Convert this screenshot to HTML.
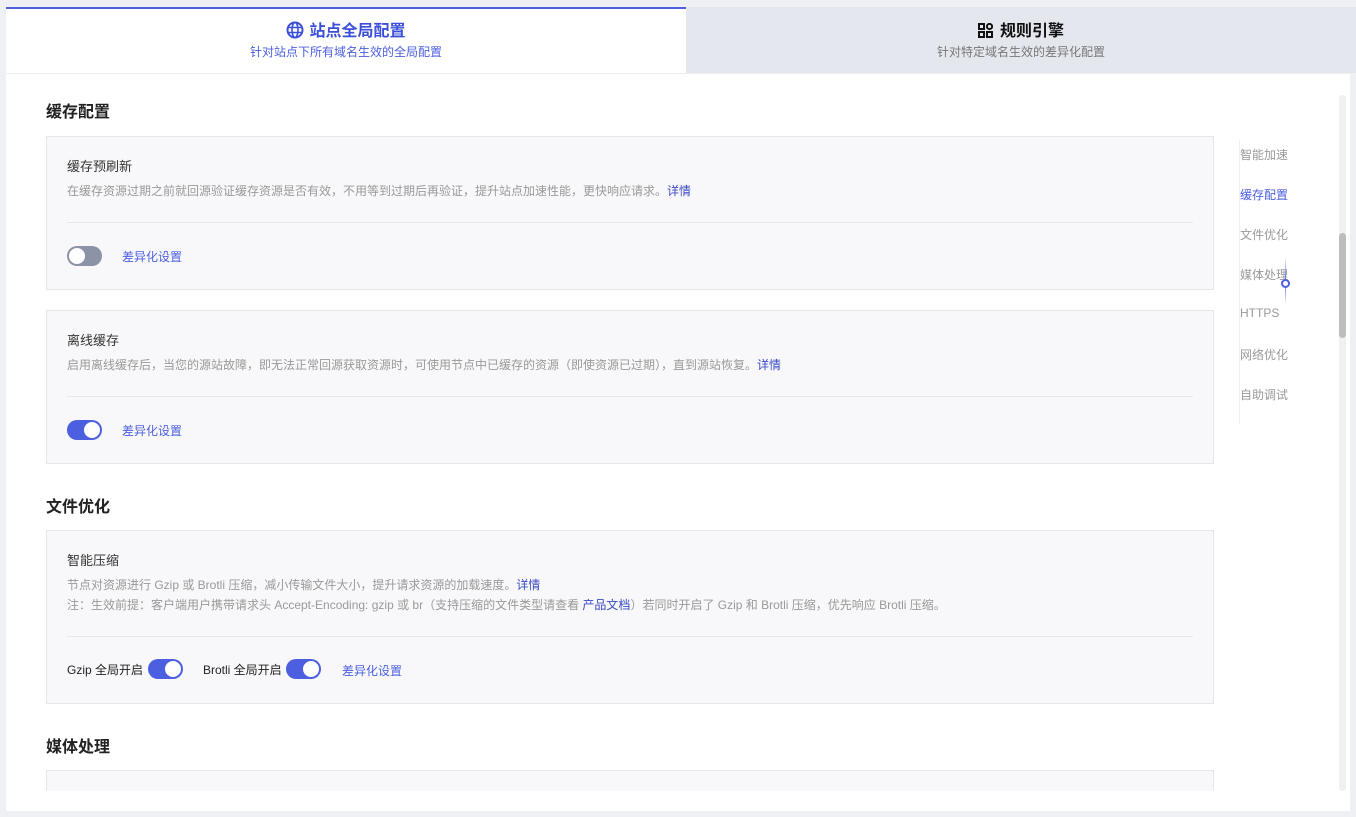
<!DOCTYPE html>
<html><head><meta charset="utf-8"><style>
*{box-sizing:border-box;margin:0;padding:0}
body{width:1356px;height:817px;background:#eef0f4;font-family:"Liberation Sans","Noto Sans CJK SC",sans-serif;position:relative;overflow:hidden;color:#222}
.tab{position:absolute;top:7px;height:66px;text-align:center}
.t1{left:6px;width:680px;background:#fff;border-top:2px solid #4c5fe0}
.t2{left:686px;width:670px;background:#e4e7ee;padding-top:2px}
.tt{font-size:16px;font-weight:bold;margin-top:12px;line-height:22px}
.ts{font-size:12px;line-height:16px;margin-top:1px}
.main{position:absolute;left:6px;top:73px;width:1344px;height:738px;background:#fff;overflow:hidden;border-top:1px solid #eee}
.clip{position:absolute;left:0;top:0;width:1344px;height:717px;overflow:hidden}
.h{position:absolute;left:40px;font-size:16px;font-weight:bold;color:#222}
.card{position:absolute;left:40px;width:1168px;background:#f8f8fa;border:1px solid #e6e6ea}
.ct{position:absolute;left:20px;top:19px;font-size:13px;color:#333}
.cd{position:absolute;left:20px;font-size:12px;color:#999;white-space:nowrap}
.a{color:#3a4bc4}
.hr{position:absolute;left:20px;right:20px;height:1px;background:#e8e8ec}
.sw{position:absolute;width:35px;height:20px;border-radius:10px}
.sw::after{content:"";position:absolute;top:2px;width:16px;height:16px;border-radius:50%;background:#fff}
.off{background:#8c93a6}.off::after{left:2px}
.on{background:#4c5fe0}.on::after{left:17px}
.lk{position:absolute;font-size:12px;color:#4c5fe0}
.nav{position:absolute;left:1234px;font-size:12px;color:#999}
</style></head><body>
<div class="tab t1"><div class="tt" style="color:#3b4fd8"><svg width="18" height="18" viewBox="0 0 18 18" style="vertical-align:-3px;margin-right:5px"><circle cx="9" cy="9" r="7.5" fill="none" stroke="#3b4fd8" stroke-width="2"/><ellipse cx="9" cy="9" rx="3" ry="7.5" fill="none" stroke="#3b4fd8" stroke-width="1.6"/><path d="M1.5 6.5h15M1.5 11.5h15" stroke="#3b4fd8" stroke-width="1.6"/></svg>站点全局配置</div><div class="ts" style="color:#4c5fe0">针对站点下所有域名生效的全局配置</div></div>
<div class="tab t2"><div class="tt" style="color:#111"><svg width="15" height="15" viewBox="0 0 15 15" style="vertical-align:-2px;margin-right:7px"><rect x="1" y="1" width="5" height="5" fill="none" stroke="#111" stroke-width="2"/><rect x="1" y="9" width="5" height="5" fill="none" stroke="#111" stroke-width="2"/><rect x="9" y="9" width="5" height="5" fill="none" stroke="#111" stroke-width="2"/><circle cx="11.5" cy="3.5" r="2.6" fill="none" stroke="#111" stroke-width="2"/></svg>规则引擎</div><div class="ts" style="color:#777">针对特定域名生效的差异化配置</div></div>
<div class="main">
<div class="clip">
<div class="h" style="top:24px">缓存配置</div>
<div class="card" style="top:62px;height:154px">
<div class="ct">缓存预刷新</div>
<div class="cd" style="top:45px">在缓存资源过期之前就回源验证缓存资源是否有效，不用等到过期后再验证，提升站点加速性能，更快响应请求。<span class="a">详情</span></div>
<div class="hr" style="top:85px"></div>
<div class="sw off" style="left:20px;top:109px"></div><div class="lk" style="left:75px;top:111px">差异化设置</div>
</div>
<div class="card" style="top:236px;height:154px">
<div class="ct">离线缓存</div>
<div class="cd" style="top:45px">启用离线缓存后，当您的源站故障，即无法正常回源获取资源时，可使用节点中已缓存的资源（即使资源已过期），直到源站恢复。<span class="a">详情</span></div>
<div class="hr" style="top:85px"></div>
<div class="sw on" style="left:20px;top:109px"></div><div class="lk" style="left:75px;top:111px">差异化设置</div>
</div>
<div class="h" style="top:419px">文件优化</div>
<div class="card" style="top:456px;height:174px">
<div class="ct">智能压缩</div>
<div class="cd" style="top:45px">节点对资源进行 Gzip 或 Brotli 压缩，减小传输文件大小，提升请求资源的加载速度。<span class="a">详情</span></div>
<div class="cd" style="top:65px">注：生效前提：客户端用户携带请求头 Accept-Encoding: gzip 或 br（支持压缩的文件类型请查看 <span class="a">产品文档</span>）若同时开启了 Gzip 和 Brotli 压缩，优先响应 Brotli 压缩。</div>
<div class="hr" style="top:105px"></div>
<div style="position:absolute;left:20px;top:130px;font-size:12px;color:#222">Gzip 全局开启</div><div class="sw on" style="left:101px;top:128px"></div>
<div style="position:absolute;left:156px;top:130px;font-size:12px;color:#222">Brotli 全局开启</div><div class="sw on" style="left:239px;top:128px"></div>
<div class="lk" style="left:295px;top:131px">差异化设置</div>
</div>
<div class="h" style="top:659px">媒体处理</div>
<div class="card" style="top:696px;height:60px"></div>
</div>
<div style="position:absolute;left:1233px;top:66px;width:1px;height:284px;background:#eee"></div>
<div class="nav" style="top:72px">智能加速</div>
<div class="nav" style="top:112px;color:#4c5fe0">缓存配置</div>
<div class="nav" style="top:152px">文件优化</div>
<div class="nav" style="top:192px">媒体处理</div>
<div class="nav" style="top:232px">HTTPS</div>
<div class="nav" style="top:272px">网络优化</div>
<div class="nav" style="top:312px">自助调试</div>
<div style="position:absolute;left:1279px;top:183px;width:1px;height:48px;background:linear-gradient(#fff,#4c5fe0,#fff)"></div>
<div style="position:absolute;left:1275px;top:205px;width:9px;height:9px;border-radius:50%;border:2px solid #4c5fe0;background:#fff"></div>
<div style="position:absolute;left:1333px;top:21px;width:7px;height:696px;border-radius:4px;background:#f0f0f0"></div>
<div style="position:absolute;left:1333px;top:159px;width:7px;height:105px;border-radius:4px;background:#bdbdbd"></div>
</div>
</body></html>
